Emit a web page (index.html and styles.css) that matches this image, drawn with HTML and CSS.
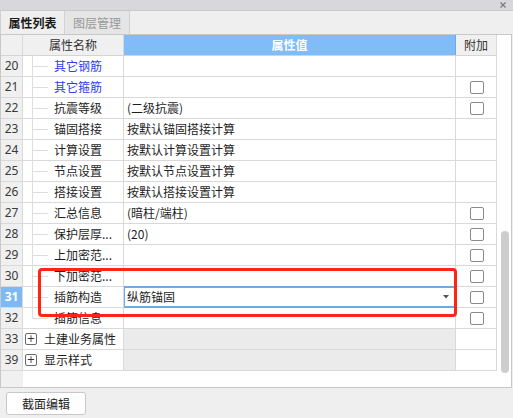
FILE: index.html
```html
<!DOCTYPE html>
<html lang="zh-CN">
<head>
<meta charset="utf-8">
<title>属性列表</title>
<link rel="stylesheet" href="styles.css">
</head>
<body>
<div class="titlebar">
  <svg class="close" width="6" height="6" viewBox="0 0 6 6"><path d="M0.5 0.5L5.5 5.5M5.5 0.5L0.5 5.5" stroke="#7a7a7a" stroke-width="1.2"/></svg>
</div>
<div class="tabs">
  <div class="tab active">属性列表</div>
  <div class="tab">图层管理</div>
</div>
<div class="panel">
  <div class="grid">
    <div class="row head">
      <div class="c num"></div>
      <div class="c name hc">属性名称</div>
      <div class="c val hv">属性值</div>
      <div class="c add hc">附加</div>
    </div>
    <div class="row"><div class="c num">20</div><div class="c name"><span class="branch"></span><span class="blue">其它钢筋</span></div><div class="c val"></div><div class="c add"></div></div>
    <div class="row"><div class="c num">21</div><div class="c name"><span class="branch"></span><span class="blue">其它箍筋</span></div><div class="c val"></div><div class="c add"><span class="cb"></span></div></div>
    <div class="row"><div class="c num">22</div><div class="c name"><span class="branch"></span>抗震等级</div><div class="c val">(二级抗震)</div><div class="c add"><span class="cb"></span></div></div>
    <div class="row"><div class="c num">23</div><div class="c name"><span class="branch"></span>锚固搭接</div><div class="c val">按默认锚固搭接计算</div><div class="c add"></div></div>
    <div class="row"><div class="c num">24</div><div class="c name"><span class="branch"></span>计算设置</div><div class="c val">按默认计算设置计算</div><div class="c add"></div></div>
    <div class="row"><div class="c num">25</div><div class="c name"><span class="branch"></span>节点设置</div><div class="c val">按默认节点设置计算</div><div class="c add"></div></div>
    <div class="row"><div class="c num">26</div><div class="c name"><span class="branch"></span>搭接设置</div><div class="c val">按默认搭接设置计算</div><div class="c add"></div></div>
    <div class="row"><div class="c num">27</div><div class="c name"><span class="branch"></span>汇总信息</div><div class="c val">(暗柱/端柱)</div><div class="c add"><span class="cb"></span></div></div>
    <div class="row"><div class="c num">28</div><div class="c name"><span class="branch"></span>保护层厚...</div><div class="c val">(20)</div><div class="c add"><span class="cb"></span></div></div>
    <div class="row"><div class="c num">29</div><div class="c name"><span class="branch"></span>上加密范...</div><div class="c val"></div><div class="c add"><span class="cb"></span></div></div>
    <div class="row"><div class="c num">30</div><div class="c name"><span class="branch"></span>下加密范...</div><div class="c val"></div><div class="c add"><span class="cb"></span></div></div>
    <div class="row"><div class="c num sel">31</div><div class="c name"><span class="branch"></span>插筋构造</div><div class="c val edit-cell"><div class="editor"><span>纵筋锚固</span><svg class="arrow" width="6" height="4" viewBox="0 0 6 4"><path d="M0 0H6L3 3.5Z" fill="#555"/></svg></div></div><div class="c add"><span class="cb"></span></div></div>
    <div class="row"><div class="c num">32</div><div class="c name"><span class="branch last"></span>插筋信息</div><div class="c val"></div><div class="c add"><span class="cb"></span></div></div>
    <div class="row"><div class="c num">33</div><div class="c name group"><span class="expander">+</span>土建业务属性</div><div class="c val gray"></div><div class="c add"></div></div>
    <div class="row"><div class="c num">39</div><div class="c name group"><span class="expander">+</span>显示样式</div><div class="c val gray"></div><div class="c add"></div></div>
    <div class="filler"><div class="fnum"></div></div>
  </div>
  <div class="scroll"><div class="thumb"></div></div>
  <div class="highlight"></div>
</div>
<div class="footer">
  <button class="btn">截面编辑</button>
</div>
</body>
</html>
```
FILE: styles.css
```css
* { box-sizing: border-box; }
html, body { margin: 0; padding: 0; }
body {
  width: 513px;
  height: 418px;
  background: #efefef;
  font-family: "Noto Sans CJK SC", "Noto Sans", sans-serif;
  font-size: 12px;
  color: #1e1e1e;
  overflow: hidden;
}
.titlebar {
  height: 11px;
  background: #d8d8dc;
  border-bottom: 1px solid #c9c9cd;
  display: flex;
  justify-content: flex-end;
  align-items: center;
  padding-right: 7px;
}
.close { display: block; }
.tabs {
  height: 23px;
  display: flex;
  background: #efefef;
}
.tab {
  width: 65px;
  display: flex;
  align-items: center;
  justify-content: center;
  color: #999;
  background: #e5e5e5;
  border-right: 1px solid #d2d2d2;
}
.tab.active {
  background: #efefef;
  color: #1a1a1a;
  border-left: 1px solid #d0d0d0;
  font-weight: 600;
}
.panel {
  position: relative;
  width: 512px;
  height: 354px;
  background: #fff;
  border: 1px solid #c8c8c8;
  display: flex;
}
.grid {
  width: 496px;
  display: flex;
  flex-direction: column;
}
.row {
  display: flex;
  height: 21px;
  border-bottom: 1px solid #d9d9d9;
}
.c {
  border-right: 1px solid #d9d9d9;
  display: flex;
  align-items: center;
  white-space: nowrap;
  line-height: 1;
}
.num {
  width: 22px;
  background: #f0f0f0;
  justify-content: center;
  color: #3a3a3a;
  font-family: "Noto Sans", sans-serif;
  font-size: 12px;
}
.num.sel {
  background: #7cb9f5;
  color: #fff;
  font-weight: bold;
}
.name { width: 101px; }
.val { width: 332px; padding-left: 3px; }
.add { width: 41px; justify-content: center; }
.head .c { background: #f0f0f0; color: #333; }
.hc { justify-content: center; }
.head .hv {
  background: #80bcf7;
  color: #fff;
  font-weight: bold;
  justify-content: center;
  padding-left: 0;
  border-right-color: #6ea9e6;
}
.head { border-bottom-color: #d4d4d4; }
.branch {
  align-self: stretch;
  width: 16px;
  margin-left: 9px;
  margin-right: 6px;
  margin-top: -1px;
  margin-bottom: -1px;
  background:
    linear-gradient(#dedede, #dedede) left top / 1px 100% no-repeat,
    linear-gradient(#dedede, #dedede) left center / 16px 1px no-repeat;
}
.branch.last {
  background:
    linear-gradient(#dedede, #dedede) left top / 1px 50% no-repeat,
    linear-gradient(#dedede, #dedede) left center / 16px 1px no-repeat;
}
.blue { color: #2e40ec; }
.gray { background: #ebebeb; }
.group { padding-left: 2px; }
.expander {
  width: 12px;
  height: 12px;
  border: 1px solid #6a6a6a;
  border-radius: 2px;
  display: flex;
  align-items: center;
  justify-content: center;
  font-family: "DejaVu Sans", sans-serif;
  font-size: 10px;
  color: #333;
  margin-right: 7px;
}
.cb {
  width: 14px;
  height: 13px;
  border: 1.5px solid #8a8a8a;
  border-radius: 2px;
  background: #fff;
  margin-left: 1px;
}
.edit-cell { padding-left: 0; }
.editor {
  width: 100%;
  height: calc(100% + 2px);
  margin-top: -1px;
  margin-bottom: -1px;
  border-top: 2px solid #6faae4;
  border-bottom: 2px solid #6faae4;
  border-left: 1.5px solid #6faae4;
  display: flex;
  align-items: center;
  justify-content: space-between;
  padding-left: 2px;
  padding-right: 6px;
}
.arrow { display: block; }
.filler {
  flex: 1;
  display: flex;
}
.fnum {
  width: 22px;
  background: #f0f0f0;
}
.scroll {
  flex: 1;
  padding-left: 4px;
  padding-top: 196px;
}
.thumb {
  width: 8px;
  height: 142px;
  background: #cdcdcd;
  border-radius: 4px;
}
.highlight {
  position: absolute;
  left: 37px;
  top: 233px;
  width: 419px;
  height: 49px;
  border: 3px solid #fe2418;
  border-radius: 4px;
  pointer-events: none;
}
.footer {
  padding: 4px 6px;
}
.btn {
  width: 80px;
  height: 23px;
  background: #fff;
  border: 1px solid #c8c8c8;
  border-radius: 3px;
  font-family: "Noto Sans CJK SC", sans-serif;
  font-size: 12px;
  color: #222;
  padding: 0;
}
```
